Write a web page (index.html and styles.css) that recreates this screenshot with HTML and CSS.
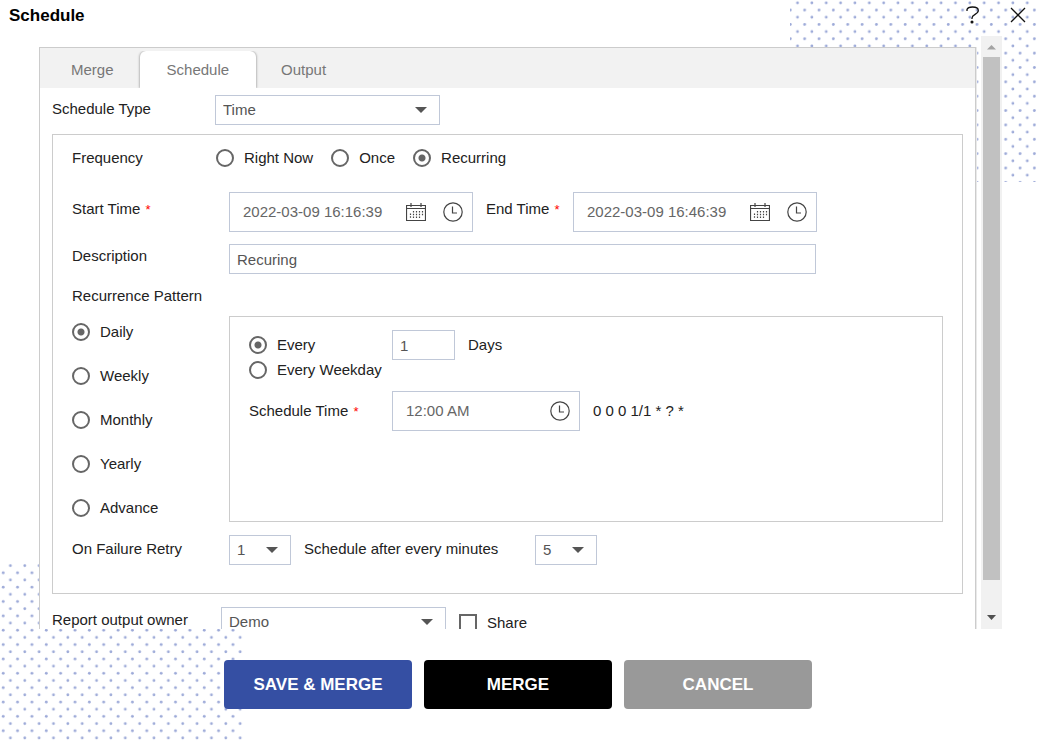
FILE: index.html
```html
<!DOCTYPE html>
<html lang="en">
<head>
<meta charset="utf-8">
<title>Schedule</title>
<link rel="stylesheet" href="styles.css">
</head>
<body>
<svg class="defs" aria-hidden="true">
  <defs>
    <pattern id="dots-a" width="14.36" height="14.36" patternUnits="userSpaceOnUse">
      <circle cx="7.5" cy="2.8" r="1.4"/><circle cx="0.3" cy="10" r="1.4"/><circle cx="14.66" cy="10" r="1.4"/>
    </pattern>
    <pattern id="dots-b" width="14.36" height="14.36" patternUnits="userSpaceOnUse">
      <circle cx="10.4" cy="2.6" r="1.4"/><circle cx="3.2" cy="9.8" r="1.4"/>
    </pattern>
    <symbol id="i-calendar" viewBox="0 0 20 20">
      <path d="M.5 3.500h19v15H.5zM.5 6.500h19M5 1v4M15 1v4"/>
      <path d="M7.500 9v7M10.500 9v7M13.500 9v7M16.500 9v5M4.500 11.500v5" stroke-dasharray="1.400 1.400"/>
    </symbol>
    <symbol id="i-clock" viewBox="0 0 20 20">
      <circle cx="10" cy="10" r="9.200"/><path d="M9.500 4.500v6.500h4.500"/>
    </symbol>
  </defs>
</svg>
<div class="dialog">
  <svg class="dots dots-top" aria-hidden="true"><rect width="100%" height="100%" fill="url(#dots-a)"/></svg>
  <svg class="dots dots-bottom" aria-hidden="true"><rect width="100%" height="100%" fill="url(#dots-b)"/></svg>

  <header class="titlebar">
    <h1 class="title">Schedule</h1>
    <button class="icon-btn" type="button" aria-label="Help">
      <svg class="help" viewBox="0 0 14 18"><path d="M1 5V3.500C1.500 1.800 3 1 6.500 1c4 0 5.800 1 5.800 3.600 0 4-6.300 3.600-6.300 7.400v1"/><circle cx="6" cy="16" r=".9"/></svg>
    </button>
    <button class="icon-btn" type="button" aria-label="Close">
      <svg class="close" viewBox="0 0 16 16"><path d="M1 1l14 14M15 1L1 15"/></svg>
    </button>
  </header>

  <div class="viewport">
    <form class="scroller">
      <div class="panel">
        <nav class="tabs" aria-label="Sections">
          <button class="tab" type="button">Merge</button>
          <button class="tab tab-active" type="button">Schedule</button>
          <button class="tab" type="button">Output</button>
        </nav>
        <div class="content">
          <div class="row type-row">
            <label class="label" for="type">Schedule Type</label>
            <select class="select wide" id="type"><option>Time</option></select>
          </div>

          <div class="box">
            <div class="row frequency">
              <span class="label" id="freq">Frequency</span>
              <div class="choices" role="radiogroup" aria-labelledby="freq">
                <label class="choice"><input type="radio" name="freq">Right Now</label>
                <label class="choice"><input type="radio" name="freq">Once</label>
                <label class="choice"><input type="radio" name="freq" checked>Recurring</label>
              </div>
            </div>

            <div class="row time-row">
              <label class="label" for="start">Start Time <span class="req">*</span></label>
              <div class="stamp">
                <input class="stamp-input" id="start" type="text" value="2022-03-09 16:16:39">
                <button class="pick" type="button" aria-label="Pick start date"><svg><use href="#i-calendar"/></svg></button>
                <button class="pick" type="button" aria-label="Pick start time"><svg><use href="#i-clock"/></svg></button>
              </div>
              <label class="label end-label" for="end">End Time <span class="req">*</span></label>
              <div class="stamp">
                <input class="stamp-input" id="end" type="text" value="2022-03-09 16:46:39">
                <button class="pick" type="button" aria-label="Pick end date"><svg><use href="#i-calendar"/></svg></button>
                <button class="pick" type="button" aria-label="Pick end time"><svg><use href="#i-clock"/></svg></button>
              </div>
            </div>

            <div class="row desc-row">
              <label class="label" for="desc">Description</label>
              <input class="text desc" id="desc" type="text" value="Recuring">
            </div>

            <div class="label pattern-title" id="pattern">Recurrence Pattern</div>
            <div class="row pattern-row">
              <div class="label patterns" role="radiogroup" aria-labelledby="pattern">
                <label class="choice"><input type="radio" name="pattern" checked>Daily</label>
                <label class="choice"><input type="radio" name="pattern">Weekly</label>
                <label class="choice"><input type="radio" name="pattern">Monthly</label>
                <label class="choice"><input type="radio" name="pattern">Yearly</label>
                <label class="choice"><input type="radio" name="pattern">Advance</label>
              </div>
              <div class="pattern-box">
                <div class="row every-row">
                  <label class="choice sub-label"><input type="radio" name="daily" checked>Every</label>
                  <input class="text days" id="days" type="text" value="1">
                  <label for="days">Days</label>
                </div>
                <label class="choice weekday"><input type="radio" name="daily">Every Weekday</label>
                <div class="row at-row">
                  <label class="sub-label" for="at">Schedule Time <span class="req">*</span></label>
                  <div class="stamp at">
                    <input class="stamp-input" id="at" type="text" value="12:00 AM">
                    <button class="pick" type="button" aria-label="Pick schedule time"><svg><use href="#i-clock"/></svg></button>
                  </div>
                  <span>0 0 0 1/1 * ? *</span>
                </div>
              </div>
            </div>

            <div class="row retry-row">
              <label class="label" for="retry">On Failure Retry</label>
              <select class="select small" id="retry"><option>1</option></select>
              <label class="after" for="after">Schedule after every minutes</label>
              <select class="select small" id="after"><option>5</option></select>
            </div>
          </div>

          <div class="row owner-row">
            <label class="label" for="owner">Report output owner</label>
            <select class="select wide" id="owner"><option>Demo</option></select>
            <label class="choice share"><input type="checkbox">Share</label>
          </div>
        </div>
      </div>
    </form>
    <div class="scrollbar" aria-hidden="true">
      <svg viewBox="0 0 21 21"><path d="M6 13.500h9L10.500 9z" fill="#a3a3a3"/></svg>
      <div class="track"><div class="thumb"></div></div>
      <svg viewBox="0 0 21 21"><path d="M6 7h9l-4.500 5z" fill="#505050"/></svg>
    </div>
  </div>

  <footer class="actions">
    <button class="action save" type="button">SAVE &amp; MERGE</button>
    <button class="action merge" type="button">MERGE</button>
    <button class="action cancel" type="button">CANCEL</button>
  </footer>
</div>
</body>
</html>
```

FILE: styles.css
```css
* { box-sizing: border-box; }

body {
  margin: 0;
  background: #fff;
  color: #222;
  font: 15px/18px "Liberation Sans", Arial, sans-serif;
}

button, input, select { font: inherit; margin: 0; }
button { border: 0; padding: 0; background: none; cursor: pointer; }

.defs { position: absolute; width: 0; height: 0; fill: #9daad8; }

.dialog {
  position: relative;
  isolation: isolate;
  display: flex;
  flex-direction: column;
  height: 100vh;
  overflow: hidden;
}

/* Decorative dotted corners behind the dialog */
.dots { position: absolute; z-index: -1; }
.dots-top { top: 0; right: 0; width: 247px; height: 182px; }
.dots-bottom { bottom: 0; left: 0; width: 243px; height: 179px; }

.titlebar {
  display: flex;
  align-items: center;
  gap: 30px;
  height: 36px;
  padding: 0 11px 6px 9px;
}
.title { flex: 1; margin: 0; color: #000; font-size: 17px; line-height: 20px; padding-top: 2px; }
.icon-btn { display: flex; }
.icon-btn svg { fill: none; stroke: #111; stroke-width: 1.3; }
.help { width: 14px; height: 18px; }
.help circle { fill: #111; }
.close { width: 16px; height: 16px; }

.viewport { display: flex; flex: 1; min-height: 0; padding-right: 35px; }
.scroller {
  flex: 1;
  min-width: 0;
  overflow-y: auto;
  padding: 11px 5px 0 39px;
  scrollbar-width: none;
}

.panel {
  border: 1px solid #ccc;
  background: #fff;
  box-shadow: 1px 0 0 #e9e9e9;
  min-width: 924px;
}

.tabs { display: flex; height: 40px; padding-top: 3px; background: #f2f2f2; }
.tab { padding: 0 26px 0 25px; color: #777; line-height: 37px; }
.tab:first-child { padding-left: 31px; }
.tab-active {
  border-radius: 6px 6px 0 0;
  background: #fff;
  box-shadow: -1px 0 2px #bbb, 1px 0 2px #bbb;
  clip-path: inset(0 -3px 0 -3px);
  padding: 0 27px;
}

.content { padding: 7px 12px 20px; }
.row { display: flex; align-items: flex-start; }
.label { flex: none; width: 157px; }
.req { color: #f00; font-size: 13px; margin-left: 1px; }

.type-row .label { width: 163px; line-height: 28px; }
.owner-row .label { width: 169px; line-height: 26px; }

.select, .text, .stamp { border: 1px solid #c0c8d8; background: #fff; color: #555; }
.select {
  height: 30px;
  padding: 0 30px 0 7px;
  border-radius: 0;
  appearance: none;
  background: #fff url("data:image/svg+xml,%3Csvg xmlns='http://www.w3.org/2000/svg' width='12' height='6'%3E%3Cpath d='M0 0h12L6 6z' fill='%23555'/%3E%3C/svg%3E") no-repeat right 12px center;
}
.wide { width: 225px; }
.small { width: 62px; }
.text { height: 30px; padding: 0 7px; }

.box { margin-top: 9px; padding: 14px 19px 28px; border: 1px solid #ccc; }

.choice { display: flex; align-items: center; gap: 10px; }
.choice input {
  flex: none;
  appearance: none;
  width: 18px;
  height: 18px;
  border: 2px solid #666;
  background: #fff;
}
.choice input[type="radio"] { border-radius: 50%; }
.choice input[type="radio"]:checked { background: radial-gradient(circle, #666 3px, #fff 4px); }

.frequency .label { width: 144px; }
.choices { display: flex; gap: 18px; }

.time-row { margin-top: 25px; }
.time-row .label { line-height: 34px; }
.time-row .end-label { width: 100px; padding-left: 13px; }
.stamp {
  display: flex;
  align-items: center;
  gap: 17px;
  width: 244px;
  height: 40px;
  padding: 0 9px 0 13px;
}
.stamp-input { flex: 1; min-width: 0; padding: 0; border: 0; outline: 0; background: none; color: #666; }
.pick { display: flex; }
.pick svg { width: 20px; height: 20px; fill: none; stroke: #444; stroke-width: 1.2; }

.desc-row { margin-top: 12px; }
.desc-row .label { line-height: 24px; }
.desc { width: 587px; }

.pattern-title { margin-top: 13px; }
.pattern-row { margin-top: 11px; }
.patterns { display: grid; gap: 26px; padding-top: 7px; }
.pattern-box { flex: 1; height: 206px; padding: 13px 19px; border: 1px solid #ccc; }
.every-row { align-items: center; }
.sub-label { width: 143px; }
.days { width: 63px; margin-right: 13px; }
.weekday { margin-top: 1px; }
.at-row { align-items: center; margin-top: 12px; }
.at { width: 188px; margin-right: 13px; }

.retry-row { margin-top: 13px; }
.retry-row .label { line-height: 28px; }
.after { width: 244px; padding-left: 13px; line-height: 28px; }

.owner-row { margin-top: 13px; }
.share { margin-left: 13px; line-height: 32px; }

/* Scroll indicator */
.scrollbar { display: flex; flex-direction: column; width: 21px; background: #f1f1f1; }
.scrollbar svg { width: 21px; height: 21px; }
.track { flex: 1; padding: 0 2px; }
.thumb { height: 95%; background: #c1c1c1; }

.actions { display: flex; justify-content: center; gap: 12px; padding: 31px 1px 33px 0; }
.action {
  width: 188px;
  height: 49px;
  border-radius: 4px;
  color: #fff;
  font-size: 17px;
  font-weight: bold;
}
.save { background: #354fa3; }
.merge { background: #000; }
.cancel { background: #999; }
```
